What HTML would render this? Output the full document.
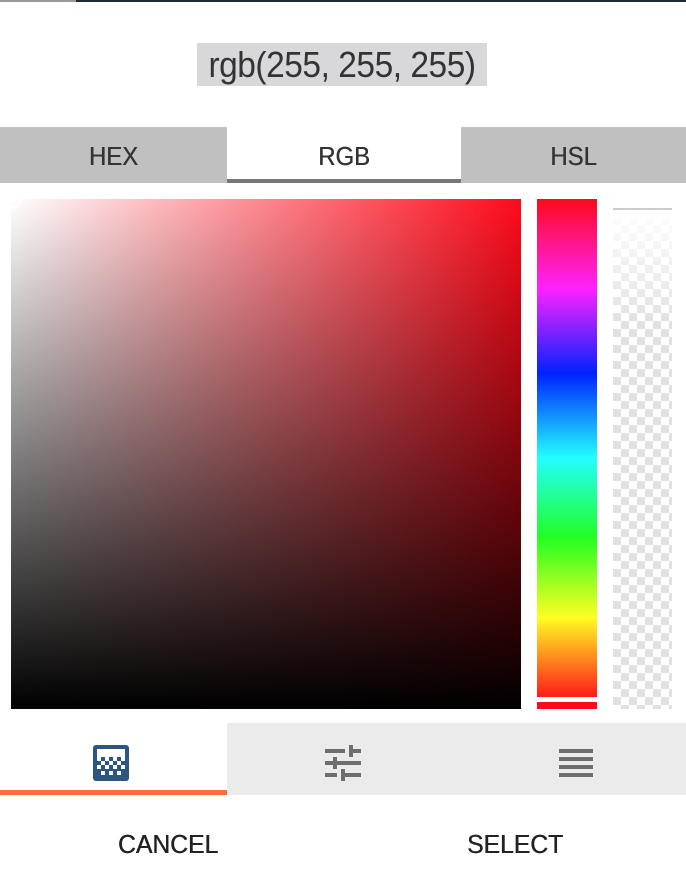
<!DOCTYPE html>
<html><head><style>
body{margin:0;width:686px;height:888px;background:#fff;font-family:"Liberation Sans",sans-serif;position:relative;overflow:hidden}
.a{position:absolute}
.tab{position:absolute;top:127px;height:56px;line-height:58px;text-align:center;font-size:26px;color:#333;transform:scaleX(0.92);text-shadow:0.4px 0 0 #333}
</style></head><body>
<div class="a" style="left:76px;top:0;width:610px;height:2px;background:#1e2a3a"></div>
<div class="a" style="left:0;top:0;width:76px;height:2px;background:#999"></div>
<div class="a" style="left:197px;top:43px;width:290px;height:43px;background:#d8d8da"></div>
<div class="a" style="left:180px;top:43px;width:324px;font-size:36px;color:#333;line-height:44px;text-align:center;letter-spacing:-0.5px;transform:scaleX(0.93)">rgb(255, 255, 255)</div>
<div class="a" style="left:0;top:127px;width:227px;height:56px;background:#c0c0c0"></div>
<div class="a" style="left:461px;top:127px;width:225px;height:56px;background:#c0c0c0"></div>
<div class="a" style="left:227px;top:179px;width:234px;height:4px;background:#777"></div>
<div class="tab" style="left:0;width:227px">HEX</div>
<div class="tab" style="left:227px;width:234px">RGB</div>
<div class="tab" style="left:461px;width:225px">HSL</div>
<div class="a" style="left:11px;top:199px;width:510px;height:510px;background:linear-gradient(to top,#000,rgba(0,0,0,0)),linear-gradient(to right,#fff,#ff0a1a)"></div>
<div class="a" style="left:3px;top:191px;width:18px;height:18px;border:2px solid #fff;border-radius:50%;box-sizing:border-box"></div>
<div class="a" style="left:537px;top:199px;width:60px;height:498px;background:linear-gradient(to bottom,#ff0a1a 0%,#ff22ff 18%,#0022ff 35%,#22ffff 52%,#22ff22 68%,#ffff22 84%,#ff1a1a 100%)"></div>
<div class="a" style="left:537px;top:702px;width:60px;height:7px;background:#ff0a1a"></div>
<div class="a" style="left:613px;top:209px;width:59px;height:500px;background-color:#fff;background-image:linear-gradient(45deg,#e0e0e0 25%,transparent 25%,transparent 75%,#e0e0e0 75%),linear-gradient(45deg,#e0e0e0 25%,transparent 25%,transparent 75%,#e0e0e0 75%);background-size:16px 16px;background-position:0 0,8px 8px"></div>
<div class="a" style="left:613px;top:209px;width:59px;height:120px;background:linear-gradient(#fff,rgba(255,255,255,0))"></div>
<div class="a" style="left:613px;top:208px;width:59px;height:2px;background:#ccc"></div>
<div class="a" style="left:227px;top:723px;width:459px;height:72px;background:#ebebeb"></div>
<div class="a" style="left:0;top:790px;width:227px;height:5px;background:#ff6a40"></div>
<svg class="a" style="left:93px;top:745px" width="36" height="36" viewBox="0 0 36 36">
<rect width="36" height="36" rx="3" fill="#2d5580"/>
<rect x="4" y="4" width="28" height="8" fill="#fff"/>
<g fill="#fff"><rect x="4" y="12" width="4" height="4"/><rect x="12" y="12" width="4" height="4"/><rect x="20" y="12" width="4" height="4"/><rect x="28" y="12" width="4" height="4"/>
<rect x="8" y="16" width="4" height="4"/><rect x="16" y="16" width="4" height="4"/><rect x="24" y="16" width="4" height="4"/>
<rect x="4" y="20" width="4" height="4"/><rect x="12" y="20" width="4" height="4"/><rect x="20" y="20" width="4" height="4"/><rect x="28" y="20" width="4" height="4"/>
<rect x="8" y="26" width="4" height="4"/><rect x="16" y="26" width="4" height="4"/><rect x="24" y="26" width="4" height="4"/></g>
</svg>
<svg class="a" style="left:325px;top:745px" width="36" height="36" viewBox="0 0 36 36" fill="#6e6e6e">
<rect x="0" y="4" width="20" height="4"/><rect x="24" y="4" width="12" height="4"/><rect x="24" y="0" width="4" height="12"/>
<rect x="0" y="16" width="8" height="4"/><rect x="12" y="16" width="24" height="4"/><rect x="8" y="12" width="4" height="12"/>
<rect x="0" y="28" width="12" height="4"/><rect x="16" y="28" width="20" height="4"/><rect x="16" y="24" width="4" height="12"/>
</svg>
<svg class="a" style="left:559px;top:749px" width="34" height="28" fill="#6e6e6e">
<rect y="0" width="34" height="4"/><rect y="8" width="34" height="4"/><rect y="16" width="34" height="4"/><rect y="24" width="34" height="4"/>
</svg>
<div class="a" style="left:68px;top:829px;width:200px;text-align:center;font-size:26px;color:#222;line-height:30px;text-shadow:0.5px 0 0 #222;transform:scaleX(0.95)">CANCEL</div>
<div class="a" style="left:415px;top:829px;width:200px;text-align:center;font-size:26px;color:#222;line-height:30px;text-shadow:0.5px 0 0 #222;transform:scaleX(0.95)">SELECT</div>
</body></html>
